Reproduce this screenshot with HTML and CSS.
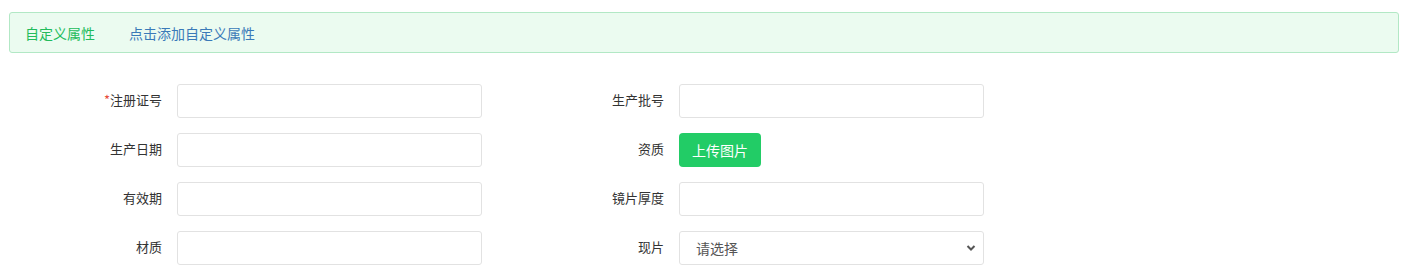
FILE: index.html
```html
<!DOCTYPE html>
<html lang="zh">
<head>
<meta charset="utf-8">
<link rel="stylesheet" href="styles.css">
</head>
<body>
<div class="page">
  <div class="alert">
    <span class="alert-title">自定义属性</span>
    <a class="alert-link">点击添加自定义属性</a>
  </div>
  <form class="form">
    <div class="field">
      <label class="label"><span class="req">*</span>注册证号</label>
      <input class="input" type="text">
    </div>
    <div class="field">
      <label class="label">生产批号</label>
      <input class="input" type="text">
    </div>
    <div class="field">
      <label class="label">生产日期</label>
      <input class="input" type="text">
    </div>
    <div class="field">
      <label class="label">资质</label>
      <button class="btn" type="button">上传图片</button>
    </div>
    <div class="field">
      <label class="label">有效期</label>
      <input class="input" type="text">
    </div>
    <div class="field">
      <label class="label">镜片厚度</label>
      <input class="input" type="text">
    </div>
    <div class="field">
      <label class="label">材质</label>
      <input class="input" type="text">
    </div>
    <div class="field">
      <label class="label">现片</label>
      <div class="select-wrap">
        <select class="select"><option>请选择</option></select>
        <svg class="chev" width="10" height="8" viewBox="0 0 10 8"><path d="M1.5 2 L5 5.5 L8.5 2" fill="none" stroke="#555" stroke-width="2"/></svg>
      </div>
    </div>
  </form>
</div>
</body>
</html>
```
FILE: styles.css
```css
html, body {
  margin: 0;
  padding: 0;
  background: #fff;
}
body {
  font-family: "Noto Sans CJK SC", "Noto Sans", sans-serif;
  font-size: 13px;
  color: #333;
}
.page {
  padding: 12px 17px 0 9px;
}
.alert {
  box-sizing: border-box;
  height: 41px;
  border: 1px solid #b2e8c5;
  border-radius: 3px;
  background: #ebfbf0;
  display: flex;
  align-items: center;
  padding: 0 15px;
  gap: 34px;
  font-size: 14px;
}
.alert-title {
  color: #22bb5c;
}
.alert-link {
  color: #3a7ab8;
  cursor: pointer;
}
.form {
  display: grid;
  grid-template-columns: 502px 502px;
  row-gap: 15px;
  margin-top: 31px;
}
.field {
  display: flex;
  align-items: center;
  height: 34px;
}
.label {
  width: 153px;
  margin-right: 15px;
  text-align: right;
  color: #333;
  font-size: 13px;
  line-height: 20px;
  align-self: flex-start;
  padding-top: 6px;
}
.req {
  color: #e74c3c;
}
.input {
  box-sizing: border-box;
  width: 305px;
  height: 34px;
  border: 1px solid #e2e2e2;
  border-radius: 3px;
  padding: 0 12px;
  font-size: 14px;
  outline: none;
  background: #fff;
}
.btn {
  box-sizing: border-box;
  width: 82px;
  height: 34px;
  border: none;
  border-radius: 4px;
  background: #22cc66;
  color: #fff;
  font-family: inherit;
  font-size: 14px;
  padding: 0;
}
.select-wrap {
  position: relative;
  width: 305px;
  height: 34px;
}
.select {
  box-sizing: border-box;
  width: 100%;
  height: 34px;
  appearance: none;
  -webkit-appearance: none;
  border: 1px solid #e2e2e2;
  border-radius: 3px;
  background: #fff;
  padding: 0 16px;
  font-family: inherit;
  font-size: 14px;
  color: #555;
  outline: none;
}
.chev {
  position: absolute;
  right: 8px;
  top: 13px;
  pointer-events: none;
}
```
